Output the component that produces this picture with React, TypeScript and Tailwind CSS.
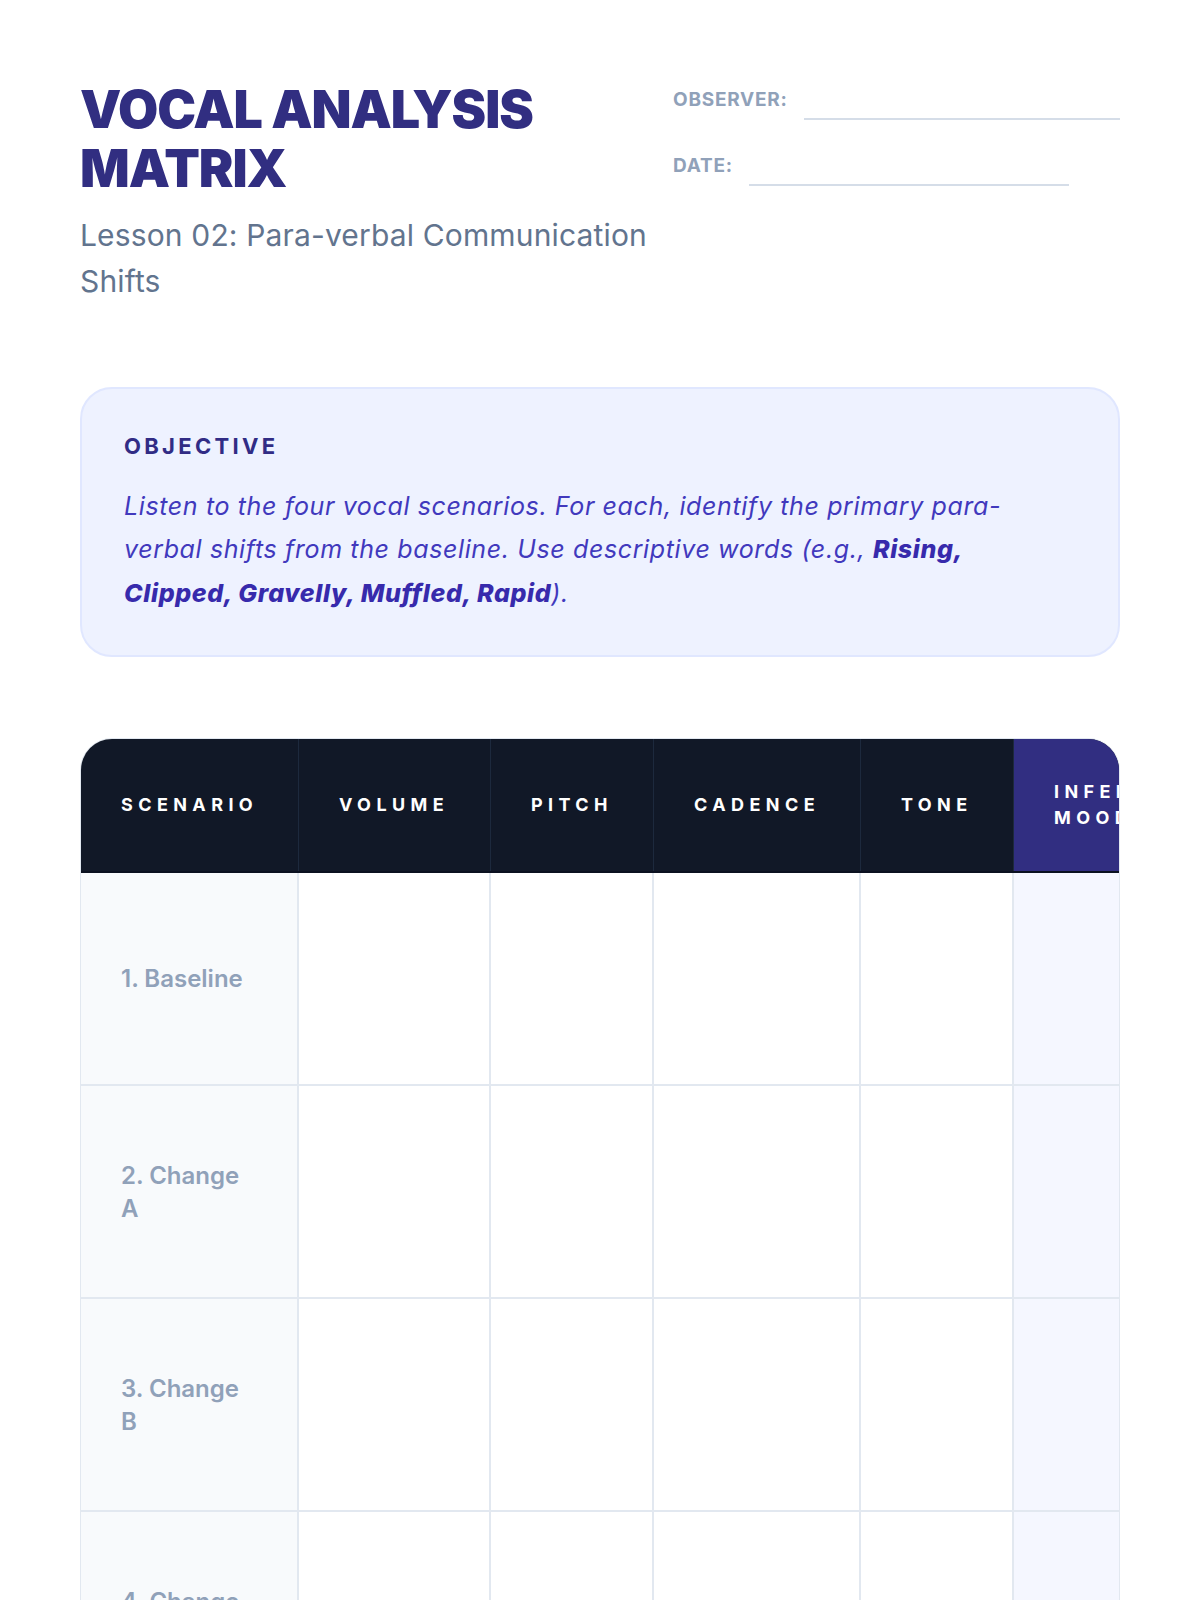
import React from 'react'

const columns = [
  { label: 'Scenario', width: 'w-[218px]' },
  { label: 'Volume',   width: 'w-[192px]' },
  { label: 'Pitch',    width: 'w-[163px]' },
  { label: 'Cadence',  width: 'w-[207px]' },
  { label: 'Tone',     width: 'w-[153px]' },
]

const scenarios = ['1. Baseline', '2. Change A', '3. Change B', '4. Change C']

function Field({ label }: { label: string }) {
  return (
    <div className="flex items-end gap-4">
      <span className="mb-1.5 text-[19px] leading-7 font-bold tracking-[0.04em] text-slate-400 uppercase">{label}</span>
      <div className="h-10 w-80 border-b-2 border-slate-300/80" />
    </div>
  )
}

export default function App() {
  return (
    <div className="min-h-screen bg-white px-20 pt-20 pb-20 font-['Inter','Noto_Sans',sans-serif]">
      {/* Kop */}
      <header className="flex justify-between">
        <div className="w-[600px]">
          <h1 className="text-[52px] leading-[59px] font-black tracking-[-0.02em] text-[#312e81] uppercase">
            Vocal Analysis Matrix
          </h1>
          <p className="mt-3.5 text-[30px] leading-[46px] tracking-[0.005em] text-slate-500">
            Lesson 02: Para-verbal Communication Shifts
          </p>
        </div>

        <div className="flex w-[447px] flex-col gap-[26px]">
          <Field label="Observer:" />
          <Field label="Date:" />
        </div>
      </header>

      {/* Doel */}
      <section className="mt-[83px] rounded-[32px] border-2 border-indigo-100 bg-indigo-50 px-[42px] pt-[41px] pb-10">
        <h2 className="text-[22px] leading-[33px] font-bold tracking-[0.15em] text-indigo-900 uppercase">Objective</h2>
        <p className="mt-[22px] max-w-[920px] text-[25px] leading-[43.4px] tracking-[0.025em] italic text-[#4139bd]">
          Listen to the four vocal scenarios. For each, identify the primary para-verbal shifts from the baseline. Use
          descriptive words (e.g., <strong className="font-extrabold text-indigo-800">Rising, Clipped, Gravelly, Muffled, Rapid</strong>).
        </p>
      </section>

      {/* Matrix */}
      <div className="mt-[81px] overflow-hidden rounded-[32px] border border-slate-200">
        <div className="w-max">
          <div className="flex border-b-2 border-[#0b1120] bg-[#111827]">
            {columns.map((col) => (
              <div
                key={col.label}
                className={`${col.width} flex items-center border-r border-slate-800 px-10 py-10 text-[18px] leading-[26px] font-bold tracking-[0.3em] text-white uppercase`}
              >
                {col.label}
              </div>
            ))}
            <div className="flex w-[200px] items-center bg-[#312e81] px-10 py-10 text-[18px] leading-[26px] font-bold tracking-[0.3em] text-white uppercase">
              Inferred Mood
            </div>
          </div>

          {scenarios.map((name) => (
            <div key={name} className="flex h-[213px] border-b-2 border-slate-200">
              <div className="flex w-[218px] items-center border-r-2 border-slate-200 bg-slate-50 px-10">
                <span className="max-w-[128px] text-[24px] leading-[33px] font-semibold text-slate-400">{name}</span>
              </div>
              <div className="w-[192px] border-r-2 border-slate-200 bg-white" />
              <div className="w-[163px] border-r-2 border-slate-200 bg-white" />
              <div className="w-[207px] border-r-2 border-slate-200 bg-white" />
              <div className="w-[153px] border-r-2 border-slate-200 bg-white" />
              <div className="w-[200px] bg-[#f5f7ff]" />
            </div>
          ))}
        </div>
      </div>
    </div>
  )
}
